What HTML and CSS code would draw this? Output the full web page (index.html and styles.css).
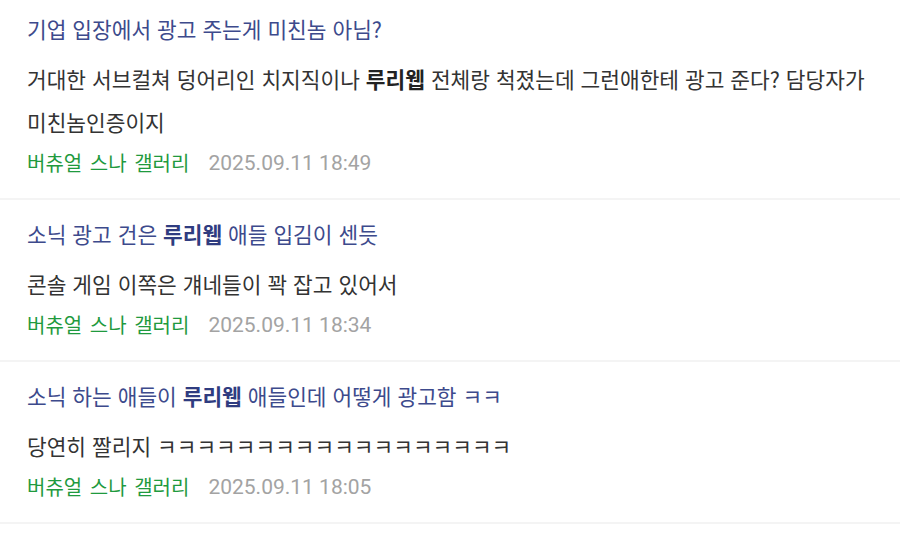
FILE: index.html
```html
<!DOCTYPE html>
<html lang="ko">
<head>
<meta charset="utf-8">
<link rel="stylesheet" href="styles.css">
</head>
<body>
<ul class="list">
  <li class="item">
    <div class="title">기업 입장에서 광고 주는게 미친놈 아님?</div>
    <div class="body">거대한 서브컬쳐 덩어리인 치지직이나 <b>루리웹</b> 전체랑 척졌는데 그런애한테 광고 준다? 담당자가 미친놈인증이지</div>
    <div class="meta"><span class="gall">버츄얼 스나 갤러리</span><span class="date">2025.09.11 18:49</span></div>
  </li>
  <li class="item">
    <div class="title">소닉 광고 건은 <b>루리웹</b> 애들 입김이 센듯</div>
    <div class="body">콘솔 게임 이쪽은 걔네들이 꽉 잡고 있어서</div>
    <div class="meta"><span class="gall">버츄얼 스나 갤러리</span><span class="date">2025.09.11 18:34</span></div>
  </li>
  <li class="item">
    <div class="title">소닉 하는 애들이 <b>루리웹</b> 애들인데 어떻게 광고함 ㅋㅋ</div>
    <div class="body">당연히 짤리지 ㅋㅋㅋㅋㅋㅋㅋㅋㅋㅋㅋㅋㅋㅋㅋㅋㅋㅋ</div>
    <div class="meta"><span class="gall">버츄얼 스나 갤러리</span><span class="date">2025.09.11 18:05</span></div>
  </li>
</ul>
</body>
</html>
```

FILE: styles.css
```css
html, body {
  margin: 0;
  padding: 0;
  background: #ffffff;
}
body {
  font-family: "Noto Sans CJK KR", "Noto Sans", sans-serif;
  overflow: hidden;
}
.list {
  list-style: none;
  margin: 0;
  padding: 0;
}
.item {
  padding: 19px 27px 21px 27px;
  border-bottom: 2px solid #f4f4f4;
}
.item:first-child {
  padding-top: 14px;
}
.title {
  font-size: 21.4px;
  line-height: 30px;
  color: #3d4a8c;
  word-break: keep-all;
}
.title b {
  font-weight: 700;
  color: #2f3c80;
}
.body {
  margin-top: 13px;
  font-size: 21.4px;
  line-height: 43px;
  color: #333333;
  word-break: keep-all;
}
.body b {
  font-weight: 700;
  color: #222222;
}
.meta {
  margin-top: 6px;
  font-size: 20px;
  line-height: 28px;
  display: flex;
  gap: 19px;
}
.gall {
  color: #1f9a3e;
  word-spacing: 2px;
}
.date {
  color: #a3a3a3;
  font-family: "Roboto", "Noto Sans", sans-serif;
  font-size: 21px;
}
```
